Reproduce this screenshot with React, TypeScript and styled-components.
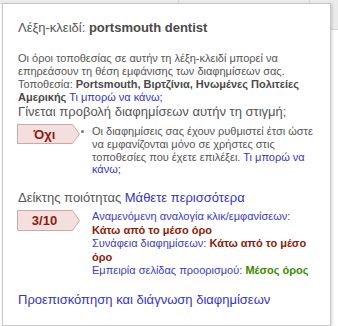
import styled, { createGlobalStyle } from 'styled-components';

const GlobalStyle = createGlobalStyle`
  html, body {
    margin: 0;
    padding: 0;
    background: #fff;
  }
  body {
    font-family: 'Liberation Sans', Arial, sans-serif;
    color: #555;
  }
`;

const Backdrop = styled.div`
  position: relative;
  width: 338px;
  height: 326px;
  overflow: hidden;
  background: #fff;
`;

const HeaderStrip = styled.div`
  display: flex;
  height: 3px;
  background: #ececec;
  border-bottom: 1px solid #dcdcdc;
`;

const HeaderCell = styled.div<{ $w: number }>`
  width: ${(p) => p.$w}px;
  border-right: 1px solid #d6d6d6;
`;

const SideCell = styled.div`
  margin-left: auto;
  width: 7px;
  height: 29px;
  background: #ebebeb;
  border-bottom: 1px solid #d8d8d8;
`;

const Popup = styled.div`
  position: absolute;
  left: 2px;
  top: 3px;
  width: 329px;
  box-sizing: border-box;
  padding: 16px 14px 17px 15px;
  background: #fff;
  border: 1px solid #c8c8c8;
  box-shadow: 1px 1px 3px rgba(0, 0, 0, 0.18);
`;

const Title = styled.div`
  font-size: 13px;
  line-height: 16px;
  color: #555;
  b {
    color: #4a4a4a;
  }
`;

const Para = styled.p`
  margin: 16px 0 0;
  font-size: 11px;
  line-height: 13px;
  color: #555;
  b {
    color: #4a4a4a;
  }
`;

const Heading = styled.div<{ $gap?: number }>`
  margin-top: ${(p) => p.$gap ?? 0}px;
  font-size: 13px;
  line-height: 16px;
  color: #555;
`;

const Link = styled.a`
  color: #3434c8;
  text-decoration: none;
  cursor: pointer;
`;

const Row = styled.div`
  display: flex;
  align-items: flex-start;
  margin-top: 4px;
  margin-left: -1px;
`;

const BadgeBox = styled.div<{ $h: number }>`
  position: relative;
  flex: none;
  width: 63px;
  height: ${(p) => p.$h}px;
  display: flex;
  align-items: center;
`;

const BadgeShape = styled.svg`
  position: absolute;
  inset: 0;
`;

const BadgeLabel = styled.span`
  position: relative;
  width: 55px;
  text-align: center;
  font-size: 13px;
  font-weight: bold;
  color: #8e1b12;
`;

const Bullet = styled.span`
  flex: none;
  width: 3px;
  height: 3px;
  margin: 6px 8px 0 1px;
  border-radius: 50%;
  background: #777;
`;

const BulletText = styled.div`
  font-size: 11px;
  line-height: 12.8px;
  color: #555;
  padding-top: 1px;
`;

const Scores = styled.div`
  margin-left: 12px;
  font-size: 11px;
  line-height: 13.5px;
  color: #3c3cc4;
`;

const Value = styled.b<{ $tone: 'bad' | 'ok' }>`
  color: ${(p) => (p.$tone === 'bad' ? '#8e1a06' : '#3a8a00')};
`;

const Badge = ({ label, h }: { label: string; h: number }) => (
  <BadgeBox $h={h}>
    <BadgeShape width="63" height={h} viewBox={`0 0 63 ${h}`}>
      <polygon
        points={`0.5,0.5 55.5,0.5 62.5,${h / 2} 55.5,${h - 0.5} 0.5,${h - 0.5}`}
        fill="#f4dfdf"
        stroke="#d7a4a4"
        strokeWidth="1"
      />
    </BadgeShape>
    <BadgeLabel>{label}</BadgeLabel>
  </BadgeBox>
);

export default function App() {
  return (
    <>
      <GlobalStyle />
      <Backdrop>
        <HeaderStrip>
          <HeaderCell $w={178} />
          <HeaderCell $w={130} />
          <SideCell />
        </HeaderStrip>
        <Popup>
          <Title>
            Λέξη-κλειδί: <b>portsmouth dentist</b>
          </Title>
          <Para>
            Οι όροι τοποθεσίας σε αυτήν τη λέξη-κλειδί μπορεί να επηρεάσουν τη θέση εμφάνισης των
            διαφημίσεων σας. Τοποθεσία: <b>Portsmouth, Βιρτζίνια, Ηνωμένες Πολιτείες Αμερικής</b>{' '}
            <Link>Τι μπορώ να κάνω;</Link>
          </Para>
          <Heading>Γίνεται προβολή διαφημίσεων αυτήν τη στιγμή;</Heading>
          <Row>
            <Badge label="Όχι" h={20} />
            <Bullet />
            <BulletText>
              Οι διαφημίσεις σας έχουν ρυθμιστεί έτσι ώστε να εμφανίζονται μόνο σε χρήστες στις
              τοποθεσίες που έχετε επιλέξει. <Link>Τι μπορώ να κάνω;</Link>
            </BulletText>
          </Row>
          <Heading $gap={14}>
            Δείκτης ποιότητας <Link>Μάθετε περισσότερα</Link>
          </Heading>
          <Row>
            <Badge label="3/10" h={21} />
            <Scores>
              Αναμενόμενη αναλογία κλικ/εμφανίσεων:
              <br />
              <Value $tone="bad">Κάτω από το μέσο όρο</Value>
              <br />
              Συνάφεια διαφημίσεων: <Value $tone="bad">Κάτω από το μέσο όρο</Value>
              <br />
              Εμπειρία σελίδας προορισμού: <Value $tone="ok">Μέσος όρος</Value>
            </Scores>
          </Row>
          <Heading $gap={14}>
            <Link>Προεπισκόπηση και διάγνωση διαφημίσεων</Link>
          </Heading>
        </Popup>
      </Backdrop>
    </>
  );
}
